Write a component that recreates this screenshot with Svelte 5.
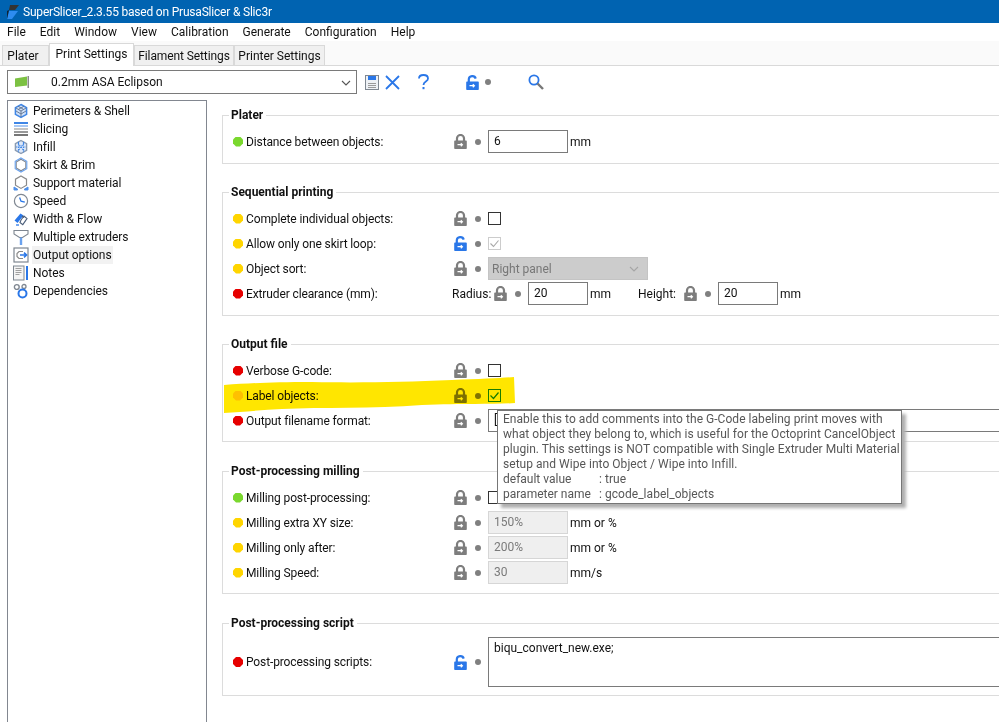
<script>
  const menus = ['File','Edit','Window','View','Calibration','Generate','Configuration','Help'];
  const tree = [
    ['Perimeters & Shell','hexfill'],['Slicing','layers'],['Infill','hexdots'],['Skirt & Brim','hex'],
    ['Support material','support'],['Speed','clock'],['Width & Flow','width'],['Multiple extruders','funnel'],
    ['Output options','output'],['Notes','notes'],['Dependencies','deps']
  ];
  const G='#7ad82e',Y='#ffd500',R='#e60000';
  const groups = [
    {t:'Plater',h:49,gap:28,rows:[{c:G,l:'Distance between objects:',k:'input',v:'6',u:'mm'}]},
    {t:'Sequential printing',h:124,gap:28,rows:[
      {c:Y,l:'Complete individual objects:',k:'check'},
      {c:Y,l:'Allow only one skirt loop:',k:'checkoff',open:true},
      {c:Y,l:'Object sort:',k:'select',v:'Right panel'},
      {c:R,l:'Extruder clearance (mm):',k:'double'}]},
    {t:'Output file',h:98,gap:29,rows:[
      {c:R,l:'Verbose G-code:',k:'check'},
      {c:Y,l:'Label objects:',k:'checkon'},
      {c:R,l:'Output filename format:',k:'wide',v:'['}]},
    {t:'Post-processing milling',h:123,gap:29,rows:[
      {c:G,l:'Milling post-processing:',k:'check'},
      {c:Y,l:'Milling extra XY size:',k:'dis',v:'150%',u:'mm or %'},
      {c:Y,l:'Milling only after:',k:'dis',v:'200%',u:'mm or %'},
      {c:Y,l:'Milling Speed:',k:'dis',v:'30',u:'mm/s'}]},
    {t:'Post-processing script',h:73,gap:0,rows:[{c:R,l:'Post-processing scripts:',k:'area',v:'biqu_convert_new.exe;',open:true}]}
  ];
  const tip = [
    'Enable this to add comments into the G-Code labeling print moves with',
    'what object they belong to, which is useful for the Octoprint CancelObject',
    'plugin. This settings is NOT compatible with Single Extruder Multi Material',
    'setup and Wipe into Object / Wipe into Infill.'
  ];
</script>

{#snippet lock(open, cls='')}
  <svg class="lock {cls}" width="13" height="15" viewBox="0 0 13 15">
    {#if open}
      <path d="M2.800 7V4.200a3.500 3.200 0 0 1 6.900-.6" fill="none" stroke="#2a77e8" stroke-width="2.200"/>
      <path d="M1 6.500h11a.8.8 0 0 1 .8.8v6.900a.8.8 0 0 1-.8.8H1a.8.8 0 0 1-.8-.8V7.300a.8.8 0 0 1 .8-.8z" fill="#2a77e8"/>
      <path d="M3.500 10.700h5M6.800 9.200l1.600 1.500-1.600 1.500" fill="none" stroke="#fff" stroke-width="1.200"/>
    {:else}
      <path d="M3 7V4.200a3.500 3.200 0 0 1 7 0V7" fill="none" stroke="#7d7d7d" stroke-width="2.200"/>
      <path d="M1 6.500h11a.8.8 0 0 1 .8.8v6.900a.8.8 0 0 1-.8.8H1a.8.8 0 0 1-.8-.8V7.300a.8.8 0 0 1 .8-.8z" fill="#7d7d7d"/>
      <path d="M3.500 10.700h5M6.800 9.200l1.600 1.500-1.600 1.500" fill="none" stroke="#fff" stroke-width="1.200"/>
    {/if}
  </svg>
{/snippet}

{#snippet dot()}<span class="dot"></span>{/snippet}

{#snippet treeIcon(n)}
  <svg width="16" height="16" viewBox="0 0 16 16" fill="none">
    {#if n==='hexfill'}
      <path d="M8 1.500l5.600 3.200v6.600L8 14.500l-5.600-3.200V4.700z" fill="#cfe0f8" stroke="#3f86e6" stroke-width="1.500"/>
      <path d="M2.600 4.800L8 8l5.400-3.200M8 8v6M5 3.200l5.600 3.200M11 3.200L5.400 6.400M3 8l5 3 5-3" stroke="#5f7390" stroke-width=".9"/>
    {:else if n==='layers'}
      <rect x="1" y="1" width="14" height="2" fill="#3f86e6"/><rect x="1" y="4" width="14" height="2" fill="#a9c8f3"/>
      <rect x="1" y="7" width="14" height="2" fill="#c4c4c4"/><rect x="1" y="10" width="14" height="2" fill="#999"/><rect x="1" y="13" width="14" height="2" fill="#777"/>
    {:else if n==='hexdots'}
      <path d="M8 1.500l5.600 3.200v6.600L8 14.500l-5.600-3.200V4.700z" fill="#dfe9f8" stroke="#8a9bb2" stroke-width="1.400"/>
      <path d="M5 4l6 8M11 4l-6 8M3 8h10M5.500 2.800v10.400M10.500 2.800v10.400" stroke="#3f86e6" stroke-width="1.100" stroke-dasharray="1.400 1"/>
    {:else if n==='hex'}
      <path d="M8 2.200l4.800 2.800v6L8 13.800l-4.800-2.800V5z" stroke="#7d8590" stroke-width="1.100"/>
      <path d="M8 1l5.800 3.400v7.200L8 15l-5.800-3.400V4.400z" stroke="#6aa2ee" stroke-width="1.100"/>
    {:else if n==='support'}
      <path d="M8 1l5.500 3.200v6L8 13.400l-5.500-3.200v-6z" stroke="#8a8a8a" stroke-width="1.200"/>
      <path d="M1 15v-3l4 2.500-1 .5zM15 15v-3l-4 2.500 1 .5z" fill="#4f8fe8" stroke="#4f8fe8"/>
    {:else if n==='clock'}
      <circle cx="8" cy="8" r="6.600" stroke="#7f8791" stroke-width="1.200"/>
      <path d="M6.600 4.600L8 8.200l3.800 1" stroke="#2a77e8" stroke-width="1.300"/>
    {:else if n==='width'}
      <path d="M1.500 9.500l6-7 3 2-6 7.500z" fill="#2a77e8"/>
      <path d="M8 9l3-4 3 2.600-4.200 6L7 11.500zM9 5l2 1.600" stroke="#4b5e7a" stroke-width="1.100"/>
      <path d="M3 14h3" stroke="#2a77e8" stroke-width="1.300"/>
    {:else if n==='funnel'}
      <path d="M1 1.500h14v3.500L9.500 8.500h-3L1 5z" stroke="#7f8791" stroke-width="1.100"/>
      <path d="M8 8.500V16" stroke="#6aa2ee" stroke-width="2.400"/>
    {:else if n==='output'}
      <rect x="1" y="1" width="14" height="14" stroke="#7f8791" stroke-width="1.200"/>
      <path d="M10 4.500H6l-2 2v3l2 2h4" stroke="#8a8a8a" stroke-width="1.200"/>
      <path d="M7 8h6.500M11 5.600L13.600 8 11 10.400" stroke="#2a77e8" stroke-width="1.500"/>
    {:else if n==='notes'}
      <rect x=".5" y="1" width="10.500" height="14" fill="#f4f4f4" stroke="#7f8791"/>
      <path d="M2.500 3.500h6M2.500 5.500h6M2.500 7.500h6M2.500 9.500h4" stroke="#a0a0a0" stroke-width="1.200"/>
      <path d="M14 1v14" stroke="#2a77e8" stroke-width="2"/>
    {:else if n==='deps'}
      <circle cx="3.800" cy="4" r="2.400" stroke="#7f8791" stroke-width="1.400"/>
      <circle cx="11" cy="3.500" r="2" stroke="#7f8791" stroke-width="1.300"/>
      <circle cx="9.500" cy="10.500" r="4" stroke="#2a77e8" stroke-width="2"/>
    {/if}
  </svg>
{/snippet}

<div class="win">
  <div class="title">
    <svg width="14" height="16" viewBox="0 0 14 16"><path d="M4 1h9L9 6H3z" fill="#333"/><path d="M3 7h9L6 15H1z" fill="#2d8cf0"/><path d="M3 6L1 15V7z" fill="#123"/></svg>
    <span>SuperSlicer_2.3.55 based on PrusaSlicer &amp; Slic3r</span>
  </div>
  <nav class="menu">{#each menus as m}<span>{m}</span>{/each}</nav>
  <div class="tabs">
    <span class="tab plater">Plater</span>
    <span class="tab active">Print Settings</span>
    <span class="tab fil">Filament Settings</span>
    <span class="tab pr">Printer Settings</span>
  </div>
  <div class="presets">
    <div class="combo">
      <svg width="14" height="12" viewBox="0 0 14 12"><path d="M0 2.500l12 -2v9L0 11z" fill="#7cc142"/><rect x="12.500" y="0" width="1.500" height="12" fill="#8a8a8a"/></svg>
      <span>0.2mm ASA Eclipson</span>
      <svg class="chev" width="10" height="6" viewBox="0 0 10 6"><path d="M1 1l4 4 4-4" fill="none" stroke="#555" stroke-width="1.100"/></svg>
    </div>
    <svg class="save" width="14" height="15" viewBox="0 0 14 15"><rect x=".5" y=".5" width="13" height="14" fill="#eef1f5" stroke="#7f8791"/><rect x="3" y="1" width="8" height="4" fill="#2a77e8"/><path d="M3 8.500h8M3 10.500h8M3 12.500h8" stroke="#9a9a9a"/></svg>
    <svg class="cross" width="15" height="15" viewBox="0 0 15 15"><path d="M1 1l13 13M14 1L1 14" stroke="#2a77e8" stroke-width="1.800"/></svg>
    <svg class="q" width="11" height="16" viewBox="0 0 11 16"><path d="M1 4.500C1 2.300 3 1 5.500 1S10 2.300 10 4.500c0 3.200-4.500 3-4.500 6.500" fill="none" stroke="#2a77e8" stroke-width="1.800"/><rect x="4.500" y="13" width="2" height="2.200" fill="#2a77e8"/></svg>
    {@render lock(true,'tlock')}
    {@render dot()}
    <svg class="mag" width="16" height="16" viewBox="0 0 16 16"><circle cx="6" cy="6" r="4.600" fill="#fff" stroke="#2a77e8" stroke-width="1.800"/><path d="M9.500 9.500l5.500 5.500" stroke="#777" stroke-width="2.400"/></svg>
  </div>
  <div class="main">
    <aside class="side">
      {#each tree as [name,ic]}
        <div class="node">
          <span class="ic">{@render treeIcon(ic)}</span>
          <span class="lbl" class:sel={name==='Output options'}>{name}</span>
        </div>
      {/each}
    </aside>
    <section class="pages">
      {#each groups as g}
        <div class="grp" style="height:{g.h}px;margin-bottom:{g.gap}px">
          <div class="legend">{g.t}</div>
          {#each g.rows as r}
            <div class="row" class:tall={r.k==='area'}>
              <span class="bul" style="background:{r.c}"></span>
              <span class="rl">{r.l}</span>
              {#if r.k==='double'}
                <span class="rad">Radius:</span>
                {@render lock(false)}{@render dot()}
                <span class="inp w60">20</span><span class="unit u47">mm</span>
                <span class="rad hei">Height:</span>
                {@render lock(false)}{@render dot()}
                <span class="inp w60">20</span><span class="unit">mm</span>
              {:else}
                {@render lock(!!r.open)}{@render dot()}
                {#if r.k==='input'}<span class="inp w80">{r.v}</span><span class="unit">{r.u}</span>
                {:else if r.k==='dis'}<span class="inp w80 off">{r.v}</span><span class="unit">{r.u}</span>
                {:else if r.k==='check'}<span class="cb"></span>
                {:else if r.k==='checkoff'}<span class="cb dim"><svg width="11" height="11" viewBox="0 0 11 11"><path d="M1.500 5.500l3 3 5-6" fill="none" stroke="#a8a8a8" stroke-width="1.100"/></svg></span>
                {:else if r.k==='checkon'}<span class="cb good"><svg width="11" height="11" viewBox="0 0 11 11"><path d="M1.500 5.500l3 3 5-6" fill="none" stroke="#1a8a00" stroke-width="1.200"/></svg></span>
                {:else if r.k==='select'}<span class="sel-off">{r.v}<svg width="10" height="6" viewBox="0 0 10 6"><path d="M1 1l4 4 4-4" fill="none" stroke="#a5a5a5" stroke-width="1.100"/></svg></span>
                {:else if r.k==='wide'}<span class="inp wide">{r.v}</span>
                {:else if r.k==='area'}<span class="inp area">{r.v}</span>{/if}
              {/if}
            </div>
          {/each}
        </div>
      {/each}
    </section>
  </div>

  <svg class="marker" width="294" height="40" viewBox="0 0 294 40"><path d="M2 8 C30 6 50 5 90 5 C140 6 180 5 230 3 C260 2 280 1 292 0 L293 26 C270 28 240 26 200 28 C150 32 100 30 60 32 C40 33 20 35 2 36 Z" fill="#ffe600"/></svg>

  <div class="tip">
    {#each tip as line}<div>{line}</div>{/each}
    <div><span class="k">default value</span>: true</div>
    <div><span class="k">parameter name</span>: gcode_label_objects</div>
  </div>
</div>

<style>
  :global(body){margin:0;background:#fff;overflow:hidden}
  .win{position:relative;width:999px;height:722px;overflow:hidden;font:12px/16px Roboto,"Noto Sans",sans-serif;color:#111;background:#fff}
  .title{height:23px;background:#0063b1;color:#fff;display:flex;align-items:center;gap:3px;padding-left:6px;letter-spacing:-.2px}
  .menu{height:18px;display:flex;gap:14px;padding-left:7px;align-items:center}
  .tabs{height:24px;background:#fafafa;display:flex;align-items:flex-end;border-bottom:1px solid #d9d9d9;padding-left:2px;white-space:nowrap}
  .tab{height:20px;line-height:20px;background:#f0f0f0;border:1px solid #d9d9d9;border-bottom:0;box-sizing:border-box;text-align:center;flex:none}
  .plater{width:47px;padding-right:5px}
  .fil{width:100px;letter-spacing:-.1px}.pr{width:91px}
  .active{width:85px;height:23px;background:#fff;line-height:20px;margin-bottom:-1px}
  .presets{height:32px;margin-bottom:2px;display:flex;align-items:center;padding-left:7px}
  .combo{width:350px;height:24px;box-sizing:border-box;border:1px solid #7a7a7a;display:flex;align-items:center;padding:0 7px;gap:22px;position:relative}
  .chev{position:absolute;right:5px;top:9px}
  .save{margin-left:8px}.cross{margin-left:6px}
  .q{margin-left:18px}
  .tlock{margin-left:37px;margin-right:6px}
  .mag{margin-left:37px}
  .main{display:flex;height:622px}
  .side{width:200px;margin-left:7px;border:1px solid #828790;border-bottom:0;box-sizing:border-box;padding-top:1px;flex:none}
  .node{height:18px;display:flex;align-items:center;gap:3px;padding-left:5px}
  .ic{width:16px;height:16px;display:block}
  .ic svg{display:block}
  .lbl{padding:0 1px;height:18px;line-height:19px;letter-spacing:-.04px}
  .sel{background:#f2f2f2}
  .pages{flex:1;padding-left:15px;min-width:0;padding-top:15px}
  .grp{width:900px;padding:0 0 0 10px;border:1px solid #dcdcdc;border-right:0;box-sizing:border-box}
  .legend{font-weight:700;padding:0 3px 0 2px;margin:-9px 0 6px -4px;line-height:16px;background:#fff;width:fit-content}
  .row{height:25px;display:flex;align-items:center;position:relative;white-space:nowrap}
  .tall{height:50px}
  .bul{width:10px;height:10px;flex:none;clip-path:polygon(30% 0,70% 0,100% 30%,100% 70%,70% 100%,30% 100%,0 70%,0 30%)}
  .rl{width:208px;margin-left:3px;flex:none;letter-spacing:-.12px}
  .lock{flex:none;margin-right:8px}
  .tlock{margin-right:6px}
  .dot{width:6px;height:6px;border-radius:50%;background:#808080;flex:none}
  .row .dot{margin-right:7px}
  .inp{box-sizing:border-box;border:1px solid #7a7a7a;height:23px;line-height:20px;padding-left:5px;display:block;flex:none;background:#fff}
  .w80{width:80px}.w60{width:60px}
  .off{background:#efefef;border-color:#d6d6d6;color:#7a7a7a}
  .unit{margin-left:2px;flex:none}
  .u47{width:48px}
  .cb{width:13px;height:13px;border:1px solid #333;box-sizing:border-box;display:grid;place-items:center;flex:none}
  .cb svg{display:block}
  .dim{border-color:#ccc}
  .good{border-color:#1a8a00}
  .sel-off{width:160px;height:23px;background:#ccc;border:1px solid #c4c4c4;box-sizing:border-box;color:#777;padding-left:3px;display:flex;align-items:center;justify-content:space-between;padding-right:8px;flex:none}
  .wide{width:600px}
  .area{width:600px;height:50px;line-height:20px}
  .rad{margin-left:-2px;margin-right:4px;flex:none;width:38px}
  .hei{margin-left:0;width:42px}
  .marker{position:absolute;left:222px;top:377px;mix-blend-mode:multiply}
  .tip{position:absolute;left:497px;top:410px;width:405px;height:94px;box-sizing:border-box;border:1px solid #767676;background:#fff;color:#575757;padding:1px 0 0 5px;white-space:nowrap;line-height:15px;letter-spacing:.04px;box-shadow:4px 4px 3px #b0b0b0}
  .k{display:inline-block;width:96px;letter-spacing:0}
</style>
